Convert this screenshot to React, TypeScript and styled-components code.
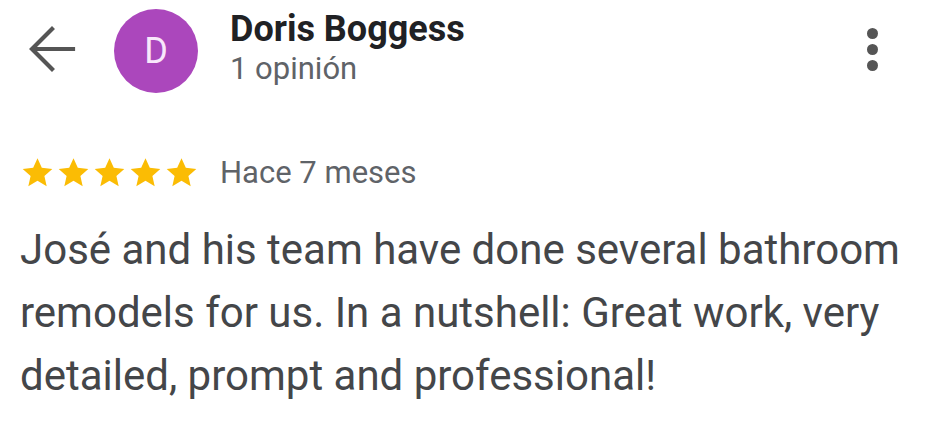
import React from 'react';
import styled, { createGlobalStyle } from 'styled-components';

const Global = createGlobalStyle`
  html, body {
    margin: 0;
    padding: 0;
    background: #ffffff;
  }
  body {
    font-family: Roboto, "Liberation Sans", Arial, sans-serif;
    -webkit-font-smoothing: antialiased;
  }
`;

const Card = styled.div`
  width: 944px;
  height: 434px;
  box-sizing: border-box;
  padding: 0 20px;
  background: #fff;
  overflow: hidden;
`;

const Header = styled.div`
  display: flex;
  align-items: flex-start;
  height: 110px;
`;

const BackButton = styled.div`
  width: 52px;
  height: 52px;
  margin: 23px 41px 0 5px;
  display: flex;
  align-items: center;
  justify-content: center;
`;

const Avatar = styled.div`
  width: 84px;
  height: 84px;
  margin-top: 9px;
  margin-left: -4px;
  border-radius: 50%;
  background: #ab47bc;
  color: #f8e8fb;
  display: flex;
  align-items: center;
  justify-content: center;
  font-size: 36px;
  font-weight: 400;
  flex-shrink: 0;
`;

const Who = styled.div`
  display: flex;
  flex-direction: column;
  margin-left: 32px;
  flex: 1;
`;

const Name = styled.div`
  font-size: 36px;
  line-height: 42px;
  font-weight: 700;
  color: #202124;
  margin-top: 8px;
`;

const Count = styled.div`
  font-size: 31px;
  line-height: 36px;
  color: #5f6368;
  margin-top: 1px;
`;

const Kebab = styled.div`
  display: flex;
  flex-direction: column;
  gap: 5px;
  margin: 28px 46px 0 0;
`;

const Dot = styled.span`
  width: 11px;
  height: 11px;
  border-radius: 50%;
  background: #555;
`;

const Meta = styled.div`
  display: flex;
  align-items: center;
  margin-top: 44px;
  height: 36px;
`;

const Stars = styled.div`
  display: flex;
  gap: 1px;
  margin-right: 21px;
`;

const When = styled.span`
  font-size: 31px;
  color: #5f6368;
`;

const Body = styled.p`
  margin: 28px 0 0;
  font-size: 42px;
  line-height: 63px;
  color: #444649;
`;

const Star = () => (
  <svg width="35" height="35" viewBox="0 0 24 24">
    <path
      fill="#fbbc04"
      d="M12 2.2l2.95 6.6 7.2.72-5.42 4.8 1.57 7.06L12 17.7l-6.3 3.68 1.57-7.06-5.42-4.8 7.2-.72z"
    />
  </svg>
);

export default function App() {
  return (
    <Card>
      <Global />
      <Header>
        <BackButton>
          <svg width="52" height="52" viewBox="0 0 52 52">
            <path
              d="M48 26H8M27 6L7 26l20 20"
              fill="none"
              stroke="#555"
              strokeWidth="4.2"
              strokeLinecap="square"
            />
          </svg>
        </BackButton>
        <Avatar>D</Avatar>
        <Who>
          <Name>Doris Boggess</Name>
          <Count>1 opinión</Count>
        </Who>
        <Kebab>
          <Dot />
          <Dot />
          <Dot />
        </Kebab>
      </Header>
      <Meta>
        <Stars>
          {[0, 1, 2, 3, 4].map((i) => (
            <Star key={i} />
          ))}
        </Stars>
        <When>Hace 7 meses</When>
      </Meta>
      <Body>
        José and his team have done several bathroom remodels for us. In a nutshell: Great work, very
        detailed, prompt and professional!
      </Body>
    </Card>
  );
}
